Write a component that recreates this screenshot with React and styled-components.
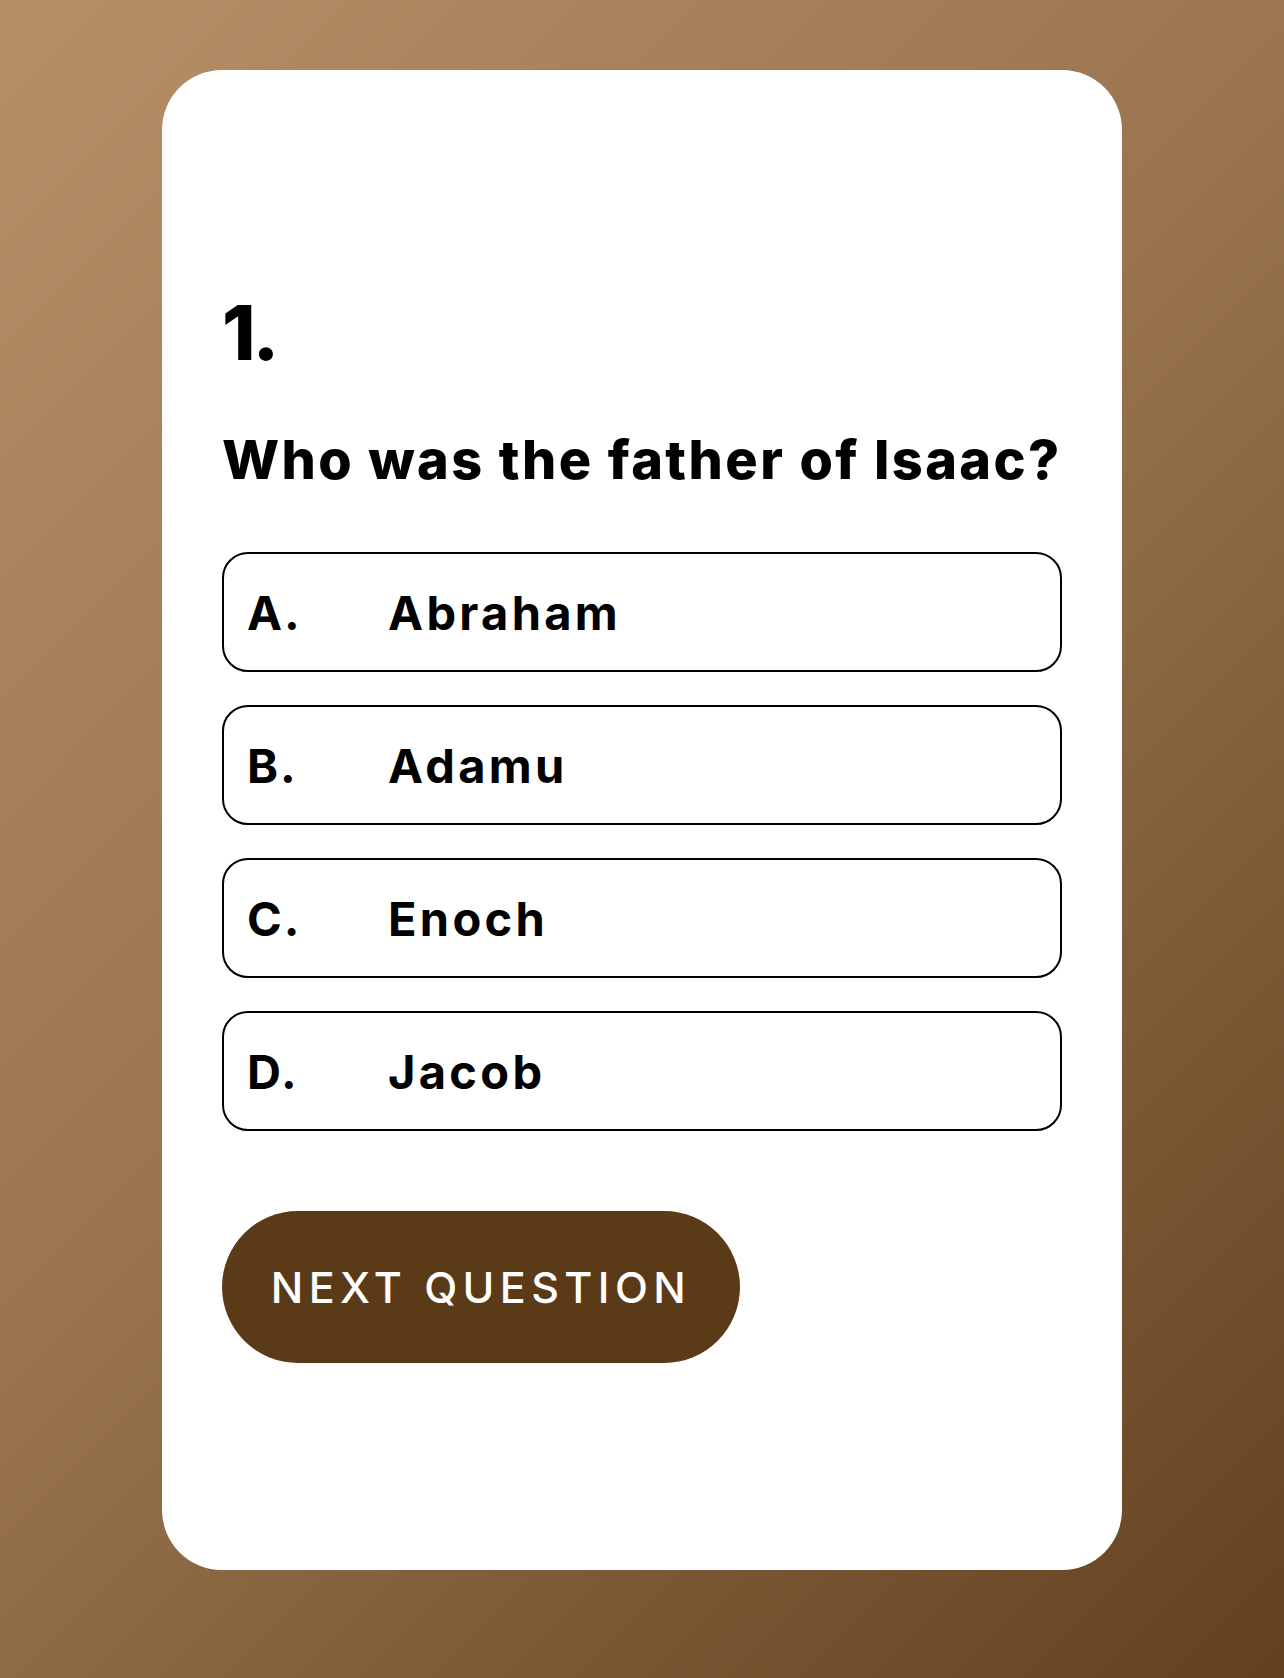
import React from "react";
import styled, { createGlobalStyle } from "styled-components";

const GlobalStyle = createGlobalStyle`
  *, *::before, *::after { box-sizing: border-box; }
  html, body { margin: 0; padding: 0; }
  body {
    font-family: "Inter", "Noto Sans", sans-serif;
    color: #000;
  }
`;

const Page = styled.main`
  min-height: 1678px;
  padding-top: 70px;
  display: flex;
  justify-content: center;
  align-items: flex-start;
  background: linear-gradient(135deg, #b78f67 0%, #9a7550 45%, #62411e 100%);
`;

const Card = styled.section`
  width: 960px;
  height: 1500px;
  background: #fff;
  border-radius: 60px;
  padding: 224px 60px 0;
  display: flex;
  flex-direction: column;
  align-items: stretch;
`;

const Number = styled.h1`
  margin: 0;
  font-size: 76px;
  line-height: 1;
  font-weight: 800;
  letter-spacing: -3px;
`;

const Question = styled.h2`
  margin: 63px 0 0;
  font-size: 54px;
  line-height: 1;
  font-weight: 800;
  letter-spacing: 2.4px;
`;

const Options = styled.ul`
  list-style: none;
  margin: 65px 0 0;
  padding: 0;
  display: flex;
  flex-direction: column;
  gap: 33px;
`;

const Option = styled.li`
  height: 120px;
  border: 2px solid #000;
  border-radius: 26px;
  padding: 0 23px;
  display: flex;
  align-items: center;
  font-size: 47px;
  font-weight: 700;
  letter-spacing: 3.3px;
  cursor: pointer;
`;

const Letter = styled.span`
  flex: 0 0 141px;
  letter-spacing: 2px;
`;

const Answer = styled.span``;

const NextButton = styled.button`
  align-self: flex-start;
  margin-top: 80px;
  width: 518px;
  height: 152px;
  border: none;
  border-radius: 76px;
  background: #5b3a17;
  color: #fff;
  font-family: "Inter", "Noto Sans", sans-serif;
  font-size: 43px;
  font-weight: 500;
  letter-spacing: 5.4px;
  padding: 0;
  cursor: pointer;
`;

const options = [
  ["A.", "Abraham"],
  ["B.", "Adamu"],
  ["C.", "Enoch"],
  ["D.", "Jacob"],
];

export default function App() {
  return (
    <>
      <GlobalStyle />
      <Page>
        <Card>
          <Number>1.</Number>
          <Question>Who was the father of Isaac?</Question>
          <Options>
            {options.map(([letter, answer]) => (
              <Option key={letter}>
                <Letter>{letter}</Letter>
                <Answer>{answer}</Answer>
              </Option>
            ))}
          </Options>
          <NextButton>NEXT QUESTION</NextButton>
        </Card>
      </Page>
    </>
  );
}
